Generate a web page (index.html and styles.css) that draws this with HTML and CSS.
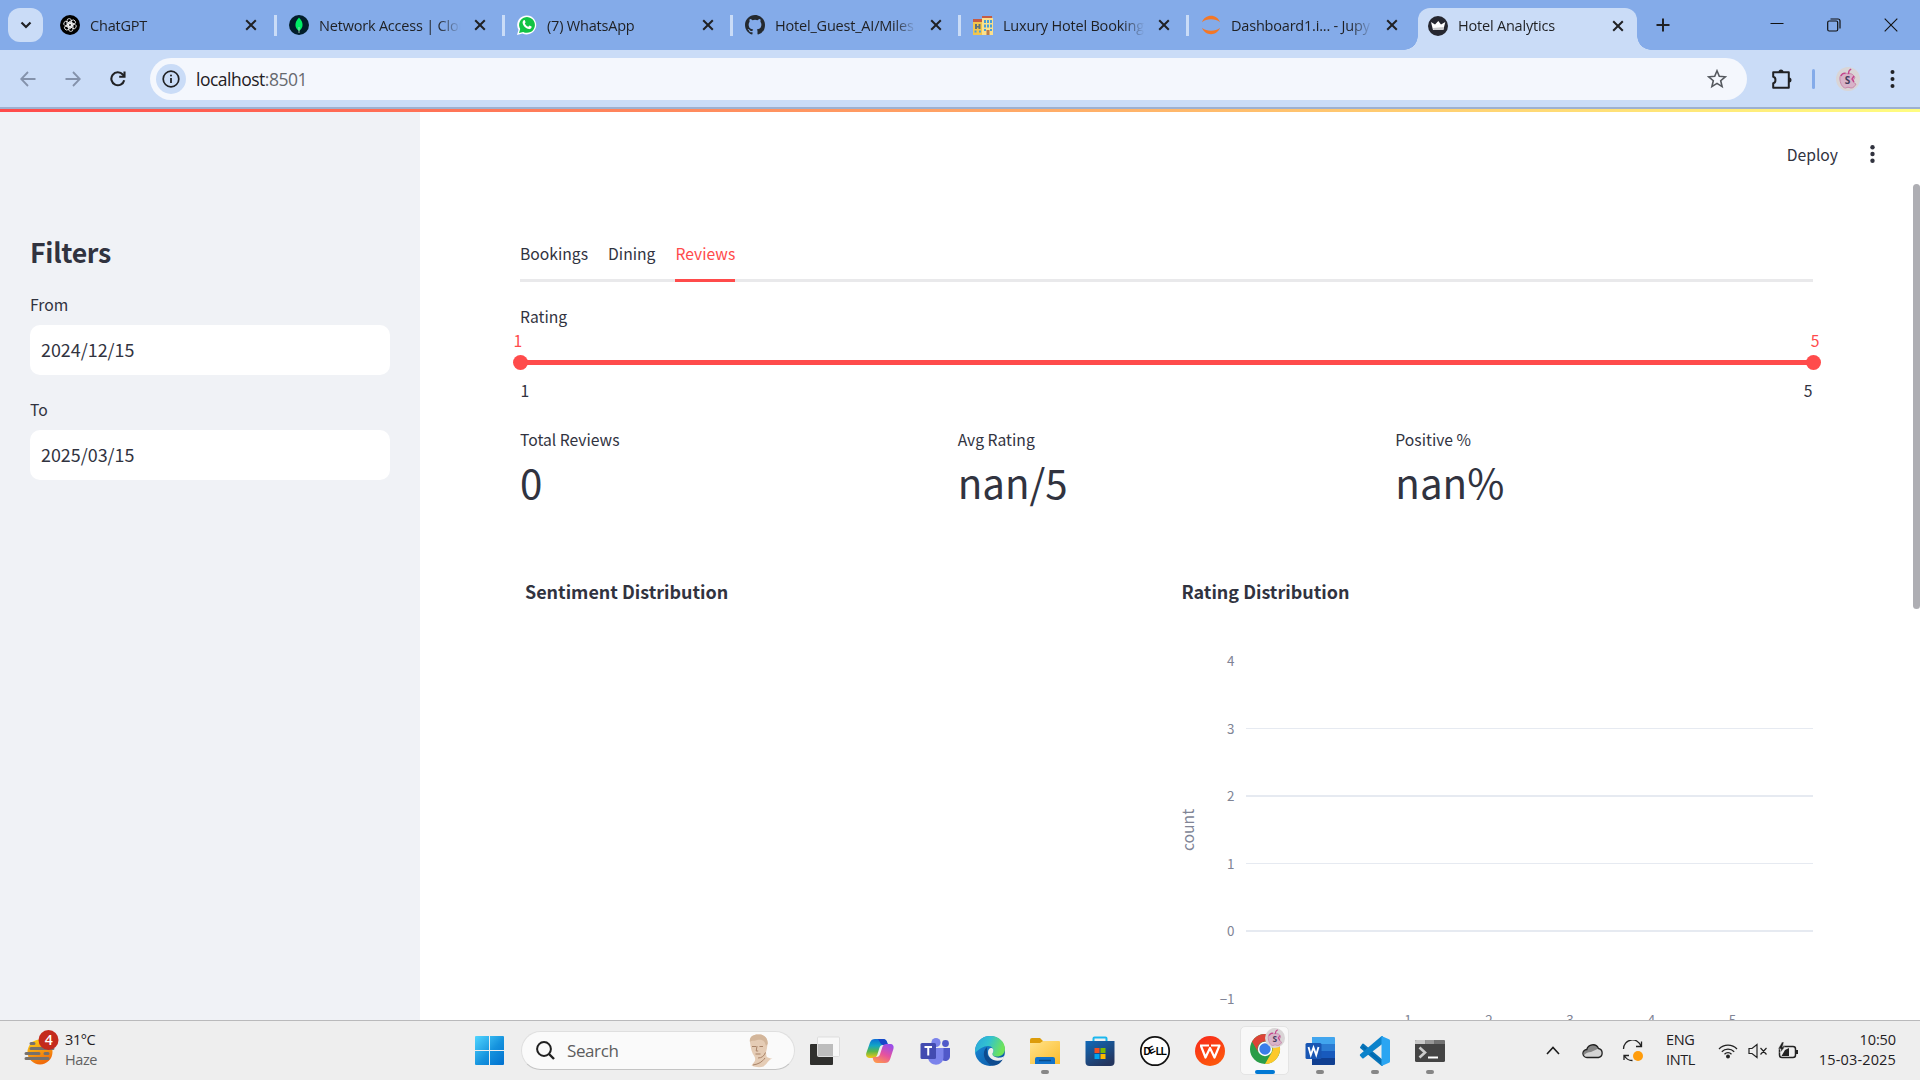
FILE: index.html
```html
<!DOCTYPE html>
<html lang="en">
<head>
<meta charset="utf-8">
<title>Hotel Analytics</title>
<link rel="stylesheet" href="styles.css">
</head>
<body>
<svg class="defs" width="0" height="0" aria-hidden="true">
  <defs>
    <symbol id="x" viewBox="0 0 12 12"><path d="M1.2 1.2l9.6 9.6M10.8 1.2L1.2 10.8" stroke="#202124" stroke-width="2" fill="none"/></symbol>
    <symbol id="apple" viewBox="0 0 24 24">
      <circle cx="12" cy="12" r="12" fill="#d9d5d6"/>
      <path d="M12 7c-5-3-9 1-8 6 .6 4.500 3 8 5.500 8l2.500-.8 3 .8c2.500 0 4-2 5-4-3-1-3.500-4-1-6-1.500-4-4.500-5-7-4z" fill="#d8b3c8" stroke="#c987ab" stroke-width="1"/>
      <path d="M12.500 7c-.2-2 .8-4 2.700-5M5 9c.8-2 2.500-3 4.500-2.500M18 9l-2 3 2 3" stroke="#c4458c" stroke-width="1.400" fill="none"/>
      <text x="11.500" y="17" text-anchor="middle" class="avatar-letter">S</text>
    </symbol>
    <linearGradient id="win" x1="0" y1="0" x2="1" y2="1"><stop stop-color="#50d5ff"/><stop offset=".55" stop-color="#1592dd"/><stop offset="1" stop-color="#0070cf"/></linearGradient>
    <linearGradient id="cpl" x1="0" y1="0" x2="0" y2="1"><stop stop-color="#0a6fd8"/><stop offset=".35" stop-color="#12a5c5"/><stop offset=".65" stop-color="#58b64c"/><stop offset="1" stop-color="#f6c812"/></linearGradient>
    <linearGradient id="cpr" x1=".7" y1="0" x2=".2" y2="1"><stop stop-color="#9b4ee8"/><stop offset=".5" stop-color="#e6529f"/><stop offset="1" stop-color="#ff9a4a"/></linearGradient>
    <linearGradient id="edgeg" x1="0" y1="0" x2="1" y2=".3"><stop stop-color="#2aa4dc"/><stop offset=".5" stop-color="#32c2d0"/><stop offset="1" stop-color="#6ee35a"/></linearGradient>
    <linearGradient id="edgeb" x1="0" y1="0" x2="1" y2="1"><stop stop-color="#1b91de"/><stop offset="1" stop-color="#0a4f9c"/></linearGradient>
    <linearGradient id="fold" x1="0" y1="0" x2="1" y2="1"><stop stop-color="#ffe38c"/><stop offset="1" stop-color="#fcbc2c"/></linearGradient>
    <linearGradient id="store" x1="0" y1="0" x2=".6" y2="1"><stop stop-color="#1169b8"/><stop offset="1" stop-color="#24365f"/></linearGradient>
    <linearGradient id="wps" x1="0" y1="0" x2=".5" y2="1"><stop stop-color="#f8281c"/><stop offset="1" stop-color="#fd560c"/></linearGradient>
    <linearGradient id="sun" x1="0" y1="0" x2=".4" y2="1"><stop stop-color="#ffd617"/><stop offset="1" stop-color="#f06c0c"/></linearGradient>
  </defs>
</svg>

<header class="tabstrip">
  <button class="tab-search"><svg width="12" height="8" viewBox="0 0 12 8"><path d="M1.500 1.500L6 6l4.500-4.500" stroke="#202124" stroke-width="2.200" fill="none"/></svg></button>
  <div class="tab">
    <svg class="fav" viewBox="0 0 20 20"><circle cx="10" cy="10" r="10"/><g fill="none" stroke="#fff" stroke-width=".8"><rect x="7" y="3.600" width="4.400" height="8.600" rx="2.200"/><rect x="7" y="3.600" width="4.400" height="8.600" rx="2.200" transform="rotate(60 10 10)"/><rect x="7" y="3.600" width="4.400" height="8.600" rx="2.200" transform="rotate(120 10 10)"/><rect x="7" y="3.600" width="4.400" height="8.600" rx="2.200" transform="rotate(180 10 10)"/><rect x="7" y="3.600" width="4.400" height="8.600" rx="2.200" transform="rotate(240 10 10)"/><rect x="7" y="3.600" width="4.400" height="8.600" rx="2.200" transform="rotate(300 10 10)"/></g></svg>
    <span class="tab-title">ChatGPT</span><svg class="close"><use href="#x"/></svg>
  </div>
  <div class="tab">
    <svg class="fav" viewBox="0 0 20 20"><circle cx="10" cy="10" r="10" fill="#021e2b"/><path d="M10 2.500c5 5 4.500 10.500 0 13.500-4.500-3-5-8.500 0-13.500z" fill="#00ed64"/><path d="M10 12v6" stroke="#b7d8c7" stroke-width=".8"/></svg>
    <span class="tab-title">Network Access | Clou</span><svg class="close"><use href="#x"/></svg>
  </div>
  <div class="tab">
    <svg class="fav" viewBox="0 0 20 20"><path d="M0 20l1.500-5.200A9.500 9.500 0 1 1 5.500 18.500z" fill="#fff"/><path d="M2 18l1.200-4A7.900 7.900 0 1 1 6.200 16.900z" fill="#12c344"/><path d="M6.700 5.300c.5-.4 1-.2 1.200.2l.7 1.700-.8 1.200c.8 1.600 1.800 2.600 3.500 3.400l1.200-1.200 2.100 1c.2 1.800-1.300 2.700-2.600 2.500C8.500 13.500 5.800 10.600 5.600 7.800c0-1 .5-2 1.100-2.500z" fill="#fff"/></svg>
    <span class="tab-title">(7) WhatsApp</span><svg class="close"><use href="#x"/></svg>
  </div>
  <div class="tab">
    <svg class="fav" viewBox="0 0 16 16"><path fill="#24292f" d="M8 0C3.580 0 0 3.580 0 8c0 3.540 2.290 6.530 5.470 7.590.4.070.55-.17.55-.38 0-.19-.01-.82-.01-1.490-2.010.37-2.530-.49-2.690-.94-.09-.23-.48-.94-.82-1.130-.28-.15-.68-.52-.01-.53.63-.01 1.080.58 1.230.82.72 1.210 1.870.87 2.330.66.07-.52.28-.87.51-1.070-1.780-.2-3.640-.89-3.640-3.950 0-.87.31-1.590.82-2.150-.08-.2-.36-1.020.08-2.120 0 0 .67-.21 2.200.82a7.600 7.600 0 0 1 4 0c1.530-1.040 2.200-.82 2.200-.82.44 1.100.16 1.920.08 2.120.51.56.82 1.270.82 2.150 0 3.070-1.870 3.750-3.650 3.950.29.25.54.73.54 1.480 0 1.070-.01 1.930-.01 2.200 0 .21.15.46.55.38A8 8 0 0 0 16 8c0-4.420-3.580-8-8-8z"/></svg>
    <span class="tab-title">Hotel_Guest_AI/Miles</span><svg class="close"><use href="#x"/></svg>
  </div>
  <div class="tab">
    <svg class="fav" viewBox="0 0 20 20"><path d="M0 6h9v14H0z" fill="#f4c54a"/><path d="M0 4h9v3H0zM9 1h10v2H9z" fill="#c65b43"/><path d="M9 3h11v17H9z" fill="#fbe08d"/><path d="M2 9h2v5H2zm3.500 0h2v5h-2zM3 11h4v1.500H3z" fill="#5d707c"/><path d="M11 5h2v3h-2zm3 0h2v3h-2zm3 0h2v3h-2zM11 9.500h2v3h-2zm3 0h2v3h-2zm3 0h2v3h-2zM11 14h2v2h-2zm6 0h2v2h-2zM1.500 15.500h2v2h-2zm4.500 0h2v2H6z" fill="#4a9fd8"/><path d="M13.500 15h3v5h-3z" fill="#bb7b49"/></svg>
    <span class="tab-title">Luxury Hotel Booking</span><svg class="close"><use href="#x"/></svg>
  </div>
  <div class="tab">
    <svg class="fav" viewBox="0 0 20 20"><path d="M1 7.200C2.500 3 6 .8 10 .8s7.500 2.200 9 6.400C16.500 5 13.500 4.200 10 4.200S3.500 5 1 7.200zM1 12.800c2.500 2.200 5.500 3 9 3s6.500-.8 9-3c-1.500 4.200-5 6.400-9 6.400s-7.500-2.200-9-6.400z" fill="#f37726"/></svg>
    <span class="tab-title">Dashboard1.i... - Jupy</span><svg class="close"><use href="#x"/></svg>
  </div>
  <div class="tab tab-active">
    <svg class="fav" viewBox="0 0 20 20"><circle cx="10" cy="10" r="10" fill="#262730"/><path d="M3 6l4 2.500L10.300 5l2.700 3.500L17.300 6l-2 8H5z" fill="#fff"/><path d="M5 12l10.800-1-.6 3H5.500z" fill="#c9c9cc"/></svg>
    <span class="tab-title">Hotel Analytics</span><svg class="close"><use href="#x"/></svg>
  </div>
  <svg class="new-tab" viewBox="0 0 14 14"><path d="M7 0.500v13M.5 7h13" stroke="#202124" stroke-width="2"/></svg>
  <div class="window-buttons">
    <svg width="14" height="14" viewBox="0 0 14 14"><path d="M.5 5.500h13" stroke="#111"/></svg>
    <svg width="14" height="14" viewBox="0 0 14 14" fill="none" stroke="#111" stroke-width="1.200"><rect x=".7" y="3" width="10" height="10" rx="1.500"/><path d="M3.500 1h7.500a2 2 0 0 1 2 2v7.500"/></svg>
    <svg width="14" height="14" viewBox="0 0 14 14"><path d="M.7.7l12.600 12.600M13.300.7L.7 13.300" stroke="#111" stroke-width="1.100"/></svg>
  </div>
</header>

<nav class="toolbar">
  <div class="nav-buttons">
    <svg width="16" height="16" viewBox="0 0 16 16" fill="none" stroke="#8492ab" stroke-width="1.800"><path d="M15.500 8H1.500M8 1L1.200 8 8 15"/></svg>
    <svg width="16" height="16" viewBox="0 0 16 16" fill="none" stroke="#8492ab" stroke-width="1.800"><path d="M.5 8h14M8 1l6.800 7L8 15"/></svg>
    <svg width="16" height="16" viewBox="0 0 16 16" fill="none" stroke="#202124" stroke-width="2.100"><path d="M14.200 9.200A6.500 6.500 0 1 1 12.800 3.500L14 5"/><path d="M14.500.5v5.300H9.200"/></svg>
  </div>
  <div class="omnibox">
    <span class="site-info"><svg width="18" height="18" viewBox="0 0 18 18"><circle cx="9" cy="9" r="7.800" fill="none" stroke="#202124" stroke-width="1.700"/><path d="M9 8v5" stroke="#202124" stroke-width="1.800"/><circle cx="9" cy="5.500" r="1" fill="#202124"/></svg></span>
    <span class="url">localhost<span class="port">:8501</span></span>
    <svg class="star" width="20" height="20" viewBox="0 0 20 20"><path d="M10 1.800l2.300 5.500 6 .5-4.600 3.900 1.400 5.900-5.100-3.200-5.100 3.200 1.400-5.900L1.700 7.800l6-.5z" fill="none" stroke="#55595f" stroke-width="1.600"/></svg>
  </div>
  <div class="tool-icons">
    <svg width="22" height="22" viewBox="0 0 22 22"><path d="M2.200 4.200h15.600v15.600H2.200v-4.500c3-.5 3-6 0-6.500z" fill="none" stroke="#202124" stroke-width="2" stroke-linejoin="round"/><path d="M7.500 4a2.500 2.500 0 0 1 5 0zM18 9.500a2.500 2.500 0 0 1 0 5z" fill="#202124"/></svg>
    <i class="tool-divider"></i>
    <svg class="profile" width="24" height="24"><use href="#apple"/></svg>
    <svg width="5" height="18" viewBox="0 0 5 18" fill="#202124"><circle cx="2.500" cy="2" r="2"/><circle cx="2.500" cy="9" r="2"/><circle cx="2.500" cy="16" r="2"/></svg>
  </div>
</nav>

<div class="app">
  <div class="decoration"></div>
  <aside class="sidebar">
    <h2>Filters</h2>
    <label>From</label>
    <div class="date">2024/12/15</div>
    <label>To</label>
    <div class="date">2025/03/15</div>
  </aside>
  <main class="main">
    <div class="app-header"><span>Deploy</span><svg width="5" height="18" viewBox="0 0 5 18" fill="#31333f"><circle cx="2.500" cy="2.300" r="2.200"/><circle cx="2.500" cy="9" r="2.200"/><circle cx="2.500" cy="15.700" r="2.200"/></svg></div>
    <div class="block">
      <div class="st-tabs"><span>Bookings</span><span>Dining</span><span class="selected">Reviews</span></div>
      <div class="slider">
        <p>Rating</p>
        <div class="thumb-values"><span>1</span><span>5</span></div>
        <div class="track"><i></i><i></i></div>
        <div class="ticks"><span>1</span><span>5</span></div>
      </div>
      <div class="metrics">
        <div><p>Total Reviews</p><strong>0</strong></div>
        <div><p>Avg Rating</p><strong>nan/5</strong></div>
        <div><p>Positive %</p><strong>nan%</strong></div>
      </div>
      <div class="charts">
        <section><h3>Sentiment Distribution</h3></section>
        <section><h3>Rating Distribution</h3>
          <svg class="plot" width="636" height="411" viewBox="0 0 636 411">
            <g fill="#e6eaf1"><rect x="69" y="119" width="567" height="1"/><rect x="69" y="186" width="567" height="2"/><rect x="69" y="254" width="567" height="1"/><rect x="69" y="321" width="567" height="2"/></g>
            <g class="tick" text-anchor="end"><text x="57.500" y="57">4</text><text x="57.500" y="125">3</text><text x="57.500" y="192">2</text><text x="57.500" y="260">1</text><text x="57.500" y="327">0</text><text x="57.500" y="395">−1</text></g>
            <g class="tick" text-anchor="middle"><text x="231" y="416">1</text><text x="312" y="416">2</text><text x="393" y="416">3</text><text x="474.500" y="416">4</text><text x="555.500" y="416">5</text></g>
            <text class="axis" text-anchor="middle" transform="translate(17 221) rotate(-90)">count</text>
          </svg>
        </section>
      </div>
    </div>
    <div class="scrollbar"></div>
  </main>
</div>

<footer class="taskbar">
  <div class="weather">
    <svg width="36" height="38" viewBox="0 0 36 38"><circle cx="16" cy="23" r="12.500" fill="url(#sun)"/><path d="M7 14.500h3M7 19.500h22M2 24.500h13M21 24.500h3M2 29.500h22" stroke="#77716c" stroke-width="3" stroke-linecap="round"/><circle cx="24.500" cy="11" r="10" fill="#c42b1c"/><text x="24.500" y="16" class="badge" text-anchor="middle">4</text></svg>
    <div><span>31°C</span><span class="muted">Haze</span></div>
  </div>
  <svg class="start" width="29" height="29" viewBox="0 0 29 29" fill="url(#win)"><path d="M1 0h13v14H0V1a1 1 0 0 1 1-1zM15 0h13a1 1 0 0 1 1 1v13H15zM0 15h14v14H1a1 1 0 0 1-1-1zM15 15h14v13a1 1 0 0 1-1 1H15z"/></svg>
  <div class="search">
    <svg width="19" height="19" viewBox="0 0 19 19" fill="none" stroke="#202020" stroke-width="2"><circle cx="8" cy="8" r="6.900"/><path d="M13 13l5 5" stroke-width="2.400"/></svg>
    <span>Search</span>
    <svg class="bust" width="24" height="34" viewBox="0 0 24 34"><path d="M1 8C0 3 5 0 10 0.500c6 0 9 4 8.500 9-.2 4-1 7-1.500 9l.5 4c1.500 1.500 4 2 6 2-4 1-5 5-9 8-4 1.500-9 .5-12-1 1-2 3-3 3.500-5 .4-2 0-3-.8-4.500C3 19 1.500 14 1 8z" fill="#e5ccb5"/><path d="M1 8C2 6 4 7.500 8 6c4-1 7 0 8 3l1 3 1.700-2C19 4 15 .5 10 .5 4 0 0 3 1 8z" fill="#d3b69b"/><path d="M3 12.500h4M10.500 12.500h3.500M8 12l-.8 5h2M6.500 20h5M9 24c4 0 6-2 7.500-5.500M4 31c6-1 9-3 12-7" stroke="#a98368" fill="none" stroke-width="1"/></svg>
  </div>
  <div class="apps">
    <div class="task"><svg width="32" height="32" viewBox="0 0 32 32"><rect x="1" y="9" width="23" height="21" rx="1" fill="#2f2f2d"/><rect x="8.500" y="2" width="22" height="19.500" rx="1" fill="#f8f8f8" stroke="#ddd"/><path d="M9 9h15v12H9z" fill="#bdbdbd"/></svg></div>
    <div class="task"><svg width="32" height="32" viewBox="0 0 32 32"><path d="M13 4h6c2.500 0 3.500 1.200 4.200 3.500L24 10h-5c-2 0-3 1-3.600 3l-2.200 7c-.7 2-2 3-4 3H6.500C3 23 1.500 21 2.300 18L6 7.500C7 5 8.500 4 11 4z" fill="url(#cpl)"/><path d="M14 4h5c2.500 0 3.500 1.200 4.200 3.500L24 10h-4.500c-2 0-3-1-3.600-3z" fill="#1747c8"/><path d="M18.500 28h-5.200c-2.500 0-3.500-1.200-4.200-3.500L8.500 22h4c2 0 3-1 3.600-3l2.300-7c.7-2 2-3 4-3h3.600c3 0 4.200 2 3.400 5L26 24.500c-1 2.500-2.500 3.500-5 3.500z" fill="url(#cpr)"/></svg></div>
    <div class="task"><svg width="32" height="32" viewBox="0 0 32 32"><circle cx="17" cy="7.500" r="4.600" fill="#7b83eb"/><circle cx="26.500" cy="8.500" r="3.400" fill="#5059c9"/><path d="M22 13h9v8c0 6-8 7-10 1z" fill="#5059c9"/><path d="M9 13h15.500v9c0 10-14 10-15.500 1z" fill="#7b83eb"/><rect x="1.500" y="8" width="15.500" height="16" rx="1.500" fill="#434bb0"/><path d="M5.500 12h7.500M9.250 12v8.500" stroke="#fff" stroke-width="2"/></svg></div>
    <div class="task"><svg width="32" height="32" viewBox="0 0 32 32"><circle cx="16" cy="16" r="15" fill="url(#edgeb)"/><path d="M2 11C5 4 10 1 16.500 1 25 1 31 7 31 14c0 5-4 7.500-8 7.500-4 0-6-2-4-4 1.500-3-1-6.500-5-6.500-4.500 0-9 3-13 7-.2-2 .2-5 1-7z" fill="url(#edgeg)"/><path d="M13 12c-6 5-3 15 5 18.500 5 .5 9-2.500 11-6.500-7 3.500-16 0-16-7z" fill="#0e4b8f"/><path d="M19 17.500c-2 2 1 6 8 5 1-.2 2-.7 3.500-1.700L29 24.500c-8 3.500-15-1-15-7 0-3 1.500-4.500 3-4.500 2 0 3 2 2 4.500z" fill="#eee"/></svg></div>
    <div class="task running"><svg width="32" height="32" viewBox="0 0 32 32"><path d="M1 5a2 2 0 0 1 2-2h8l3 3h2v6H1z" fill="#dc9c0a"/><path d="M1 8h10l3-2h16a1 1 0 0 1 1 1v22H1z" fill="url(#fold)"/><path d="M6 29v-5a2 2 0 0 1 2-2h16a2 2 0 0 1 2 2v5z" fill="#1173cb"/><path d="M10 25.500h12" stroke="#084b89" stroke-width="1.500"/></svg></div>
    <div class="task"><svg width="32" height="32" viewBox="0 0 32 32"><path d="M9.500 7V3.500a1 1 0 0 1 1-1h11a1 1 0 0 1 1 1V7" stroke="#1bb7ee" stroke-width="2" fill="none"/><path d="M1.500 6h29v21a4 4 0 0 1-4 4h-21a4 4 0 0 1-4-4z" fill="url(#store)"/><path fill="#f25022" d="M10.500 13h5v5h-5z"/><path fill="#7fba00" d="M16.500 13h5v5h-5z"/><path fill="#00a4ef" d="M10.500 19h5v5h-5z"/><path fill="#ffb900" d="M16.500 19h5v5h-5z"/></svg></div>
    <div class="task"><svg width="32" height="32" viewBox="0 0 32 32"><circle cx="16" cy="16" r="14.200" fill="#fff" stroke="#111" stroke-width="1.700"/><g class="dell"><text x="4.500" y="19.500">D</text><text transform="translate(11.200 19.500) rotate(-28)">E</text><text x="16.800" y="19.500">L</text><text x="21.700" y="19.500">L</text></g></svg></div>
    <div class="task"><svg width="32" height="32" viewBox="0 0 32 32"><circle cx="16" cy="16" r="15" fill="url(#wps)"/><path d="M6 10.500h9M7 11l4.500 11.500L16 13l4.500 9.500L25.500 10.500H17" fill="none" stroke="#fff" stroke-width="2.200" stroke-linejoin="round"/></svg></div>
    <div class="task active"><svg width="38" height="40" viewBox="0 0 38 40"><circle cx="18" cy="21" r="15" fill="#2a9d48"/><path d="M5 13.500A15 15 0 0 1 31 13.500H18a7.500 7.500 0 0 0-6.500 11.200z" fill="#dd4437"/><path d="M31 13.500a15 15 0 0 1-13 22.500l6.500-11.200A7.500 7.500 0 0 0 18 13.500z" fill="#fdc92b"/><circle cx="18" cy="21" r="7.200" fill="#fff"/><circle cx="18" cy="21" r="5.700" fill="#3a7de9"/><use href="#apple" x="18" y="0" width="20" height="20"/></svg></div>
    <div class="task running"><svg width="32" height="32" viewBox="0 0 32 32"><path fill="#41a5ee" d="M8 2h22a1 1 0 0 1 1 1v6H8z"/><path fill="#2b7cd3" d="M8 9h23v7H8z"/><path fill="#185abd" d="M8 16h23v7H8z"/><path fill="#103f91" d="M8 23h23v6a1 1 0 0 1-1 1H8z"/><rect x="1.500" y="8" width="16" height="16" rx="1.500" fill="#1956b3"/><path d="M4.500 12l2.300 8 2.700-7.500 2.700 7.500 2.300-8" stroke="#fff" stroke-width="1.900" fill="none"/></svg></div>
    <div class="task running"><svg width="32" height="32" viewBox="0 0 32 32"><path d="M4 9.500L23 25.500V30L2 12.500z" fill="#0068b0" stroke="#0874b8" stroke-width="2" stroke-linejoin="round"/><path d="M23 2v6L4 22.500 1.800 20z" fill="#0c83cb" stroke="#0c83cb" stroke-width="2" stroke-linejoin="round"/><path d="M22.500 1l7.500 3.300a1.500 1.500 0 0 1 1 1.500v20.500a1.500 1.500 0 0 1-1 1.500L22.500 31z" fill="#2aa5f2"/></svg></div>
    <div class="task running"><svg width="32" height="32" viewBox="0 0 32 32"><rect x="1" y="5" width="30" height="22" rx="1.500" fill="#444"/><path d="M2.500 5h9v4H1V6.500A1.500 1.500 0 0 1 2.500 5z" fill="#c9c9c9"/><path d="M11.500 5h9v4h-9z" fill="#989898"/><path d="M20.500 5h9A1.500 1.500 0 0 1 31 6.500V9H20.500z" fill="#727272"/><path d="M5.500 12.500l5.500 5-5.500 5" stroke="#ccc" stroke-width="2.600" fill="none"/><path d="M14 22.500h10" stroke="#fff" stroke-width="2"/></svg></div>
  </div>
  <div class="tray">
    <svg width="14" height="9" viewBox="0 0 14 9"><path d="M1 8l6-6.500L13 8" fill="none" stroke="#1b1b1b" stroke-width="1.600"/></svg>
    <svg class="cloud" width="22" height="16" viewBox="0 0 22 16"><path d="M5 14.500A4 4 0 0 1 4.800 6.500 6.200 6.200 0 0 1 16.500 5.500 4.600 4.600 0 0 1 16.500 14.500z" fill="#d4d4d4"/><path d="M1.500 9C3 5.500 5 6.500 5.500 4.500c3-5 9-4 11 1L9 9c-3 0-5 1-7 3z" fill="#858585"/><path d="M5 14.500A4 4 0 0 1 4.800 6.500 6.200 6.200 0 0 1 16.500 5.500 4.600 4.600 0 0 1 16.500 14.500z" fill="none" stroke="#222" stroke-width="1.300"/></svg>
    <svg class="sync" width="22" height="22" viewBox="0 0 22 22"><path d="M1.500 9A9 9 0 0 1 19 6M19.500 1.500V6.500H14M2 20v-4.500h5M2.500 16a9 9 0 0 0 8 4.500" fill="none" stroke="#222" stroke-width="1.300"/><circle cx="16" cy="16" r="5" fill="#ff9c0b"/></svg>
    <div class="lang"><span>ENG</span><span>INTL</span></div>
    <svg class="wifi" width="20" height="16" viewBox="0 0 20 16" fill="none" stroke="#222" stroke-width="1.300"><path d="M1 6a12.500 12.500 0 0 1 18 0M3.800 8.700a8.700 8.700 0 0 1 12.400 0M6.500 11.200a5 5 0 0 1 7 0"/><circle cx="10" cy="13.500" r="1.300" fill="#222"/></svg>
    <svg class="mute" width="20" height="16" viewBox="0 0 20 16" fill="none" stroke="#222" stroke-width="1.200"><path d="M1 5.500h3L9 1.500v13L4 10.500H1zM12.500 5l6 6.500M18.500 5l-6 6.500"/></svg>
    <svg class="battery" width="21" height="18" viewBox="0 0 21 18"><rect x="1.500" y="4.500" width="16" height="11" rx="2.500" fill="none" stroke="#222" stroke-width="1.500"/><path d="M18 8h2v4h-2zM3.500 14L7 8l4-2v8z" fill="#222"/><path d="M4 0L0 7h3l-1 4 5-6H4.500L6 0z" fill="#222" stroke="#eee" stroke-width=".5"/></svg>
    <div class="clock"><span>10:50</span><span class="day">15-03-2025</span></div>
  </div>
</footer>
</body>
</html>
```
FILE: styles.css
```css
* { box-sizing: border-box; }
body {
  margin: 0;
  width: 1920px;
  height: 1080px;
  overflow: hidden;
  display: flex;
  flex-direction: column;
  background: #fff;
  font-family: "Open Sans", sans-serif;
  color: #1f2023;
}
svg { display: block; flex: none; }
p, h2, h3 { margin: 0; }
.defs { position: absolute; }
.avatar-letter { font: bold 10px "Open Sans", sans-serif; fill: #443c5c; }

/* Browser tabs */
.tabstrip {
  height: 50px;
  flex: none;
  display: flex;
  align-items: center;
  background: #84abe9;
}
.tab-search {
  width: 35px;
  height: 34px;
  margin: 0 5px 0 8px;
  padding: 0;
  border: 0;
  border-radius: 12px;
  background: #cadcf7;
  display: grid;
  place-items: center;
}
.tab {
  width: 228px;
  height: 21px;
  flex: none;
  display: flex;
  align-items: center;
  padding: 0 18px 0 12px;
  border-right: 3px solid #cadcf7;
}
.tab:nth-of-type(1) { width: 229px; }
.fav { width: 20px; height: 20px; margin-right: 10px; }
.tab-title {
  width: 143px;
  margin-right: 12px;
  flex: none;
  overflow: hidden;
  white-space: nowrap;
  font-size: 14.5px;
  letter-spacing: -0.2px;
  line-height: 24px;
  padding-top: 1px;
  mask-image: linear-gradient(90deg, #000 83%, transparent 99%);
}
.close { width: 12px; height: 12px; }
.tab:nth-of-type(6) { border-color: transparent; }
.tab-active {
  position: relative;
  width: 219px;
  height: 42px;
  align-self: flex-end;
  padding: 0 0 7px 10px;
  margin-left: 1px;
  border: 0;
  border-radius: 12px 12px 0 0;
  background: #cadcf7;
}
.tab-active .tab-title { margin-right: 11px; padding-top: 0; }
.tab-active::before, .tab-active::after {
  content: "";
  position: absolute;
  bottom: 0;
  width: 14px;
  height: 14px;
}
.tab-active::before { left: -14px; background: radial-gradient(circle at 0 0, transparent 13.500px, #cadcf7 14px); }
.tab-active::after { right: -14px; background: radial-gradient(circle at 100% 0, transparent 13.500px, #cadcf7 14px); }
.new-tab { width: 14px; height: 14px; margin-left: 19px; }
.window-buttons { margin-left: auto; margin-right: 22px; display: flex; gap: 43px; }

/* Address bar */
.toolbar {
  height: 59px;
  flex: none;
  display: flex;
  align-items: center;
  background: #cadcf7;
  border-bottom: 2px solid #9db0d0;
}
.nav-buttons { width: 150px; padding-left: 20px; display: flex; gap: 29px; }
.omnibox {
  width: 1597px;
  height: 42px;
  border-radius: 21px;
  background: #f4f7fd;
  display: flex;
  align-items: center;
  padding: 0 20px 0 6px;
}
.site-info {
  width: 30px;
  height: 30px;
  border-radius: 50%;
  background: #cadcf7;
  display: grid;
  place-items: center;
}
.url { margin-left: 10px; padding-top: 1px; font-size: 17.500px; letter-spacing: -0.5px; line-height: 30px; }
.port { color: #66696f; }
.star { margin-left: auto; }
.tool-icons { flex: 1; display: flex; align-items: center; padding: 0 25px 0 24px; }
.tool-divider { width: 3px; height: 20px; margin: 0 21px 0 19px; background: #84abe9; border-radius: 2px; }
.profile { margin-right: auto; }

/* Dashboard */
.app {
  position: relative;
  height: 911px;
  flex: none;
  display: flex;
  overflow: hidden;
  font-family: "Noto Sans CJK SC", "Noto Sans", sans-serif;
  font-size: 15.700px;
  color: #31333f;
}
.decoration {
  position: absolute;
  inset: 0 0 auto;
  height: 3px;
  background: linear-gradient(90deg, #ff4b4b, #fffd80);
}
.sidebar { width: 420px; background: #f0f2f6; padding: 125px 30px 0; }
.sidebar h2 { font-size: 26.700px; font-weight: 600; letter-spacing: -0.3px; line-height: 36px; height: 55px; }
.sidebar label { display: block; height: 36px; line-height: 26px; padding-top: 3px; }
.date {
  height: 50px;
  margin-bottom: 19px;
  padding-left: 11px;
  border-radius: 10px;
  background: #fff;
  font-size: 17.900px;
  line-height: 49px;
}
.main { position: relative; flex: 1; }
.app-header {
  height: 75px;
  display: flex;
  justify-content: flex-end;
  align-items: center;
  gap: 32px;
  padding: 15px 45px 0 0;
}
.block { width: 1293px; margin-left: 100px; padding-top: 45px; }
.st-tabs { height: 53px; display: flex; gap: 20px; border-bottom: 3px solid #e9e9eb; line-height: 50px; }
.st-tabs .selected { height: 53px; color: #ff4b4b; border-bottom: 3px solid #ff4b4b; }
.slider { height: 145px; padding-top: 22px; line-height: 26px; }
.thumb-values { display: flex; justify-content: space-between; height: 30px; margin: -2px -6.500px 0; color: #ff4b4b; }
.track { height: 5px; background: #ff4b4b; display: flex; justify-content: space-between; align-items: center; margin: 2px -7px 0; background-clip: content-box; padding: 0 7px; }
.track i { width: 15px; height: 15px; flex: none; margin: 0 -7.500px; border-radius: 50%; background: #ff4b4b; }
.ticks { display: flex; justify-content: space-between; margin: 13px 0.500px 0; }
.metrics { height: 149px; display: grid; grid-template-columns: 1fr 1fr 1fr; column-gap: 20px; line-height: 26px; }
.metrics strong { display: block; font-size: 40.300px; font-weight: 400; line-height: 57px; }
.charts { display: grid; grid-template-columns: 1fr 1fr; column-gap: 20px; }
.charts h3 { height: 33px; padding-left: 5px; font-size: 17.950px; font-weight: 700; line-height: 30px; }
.tick { font-size: 13.400px; fill: #808495; }
.axis { font-size: 15.700px; fill: #808495; }
.scrollbar { position: absolute; right: 0; top: 75px; width: 7px; height: 425px; border-radius: 4px; background: #aeaeb3; }

/* Taskbar */
.taskbar {
  position: relative;
  height: 60px;
  flex: none;
  display: flex;
  align-items: center;
  background: #eee;
  border-top: 1px solid #b9b9bb;
  font-size: 14.500px;
  letter-spacing: -0.4px;
  line-height: 20px;
}
.weather { width: 452px; display: flex; gap: 5px; padding-left: 24px; }
.weather > svg { margin-top: -2px; }
.weather div, .lang, .clock { display: flex; flex-direction: column; margin-top: -1px; }
.muted { color: #626262; }
.badge { font: 600 14px "Open Sans", sans-serif; fill: #fff; }
.start { margin-left: 23px; }
.search {
  width: 274px;
  height: 39px;
  margin: 0 2px 0 17px;
  display: flex;
  align-items: center;
  padding: 0 21px 0 14px;
  border: 1px solid #dfdfdf;
  border-bottom-color: #c4c4c4;
  border-radius: 20px;
  background: #fafafa;
  color: #5d5d5d;
  font-size: 17px;
}
.search span { margin-left: 12px; }
.bust { margin-left: auto; }
.apps { display: flex; height: 100%; align-items: center; }
.task { position: relative; width: 55px; height: 49px; display: grid; place-items: center; }
.running::after, .active::after {
  content: "";
  position: absolute;
  bottom: 1px;
  left: 23.500px;
  width: 8px;
  height: 4px;
  border-radius: 2px;
  background: #868686;
}
.active::before {
  content: "";
  position: absolute;
  inset: 0 3px;
  border: 1px solid #e4e4e4;
  border-radius: 5px;
  background: #f8f8f8;
}
.active svg { position: relative; margin: -5px 0 0 3px; }
.active::after { left: 17.500px; width: 20px; background: #0078d4; }
.dell { font: bold 10px "Liberation Sans", sans-serif; letter-spacing: 0; }
.tray { flex: 1; display: flex; align-items: center; padding: 0 24px 0 89px; }
.cloud { margin-left: 22px; }
.sync { margin-left: 18px; }
.lang { margin-left: 22px; width: 52px; }
.mute { margin-left: 10px; }
.battery { margin-left: 10px; }
.clock { margin-left: auto; text-align: right; letter-spacing: -0.1px; }
.day { letter-spacing: 0.15px; }
```
